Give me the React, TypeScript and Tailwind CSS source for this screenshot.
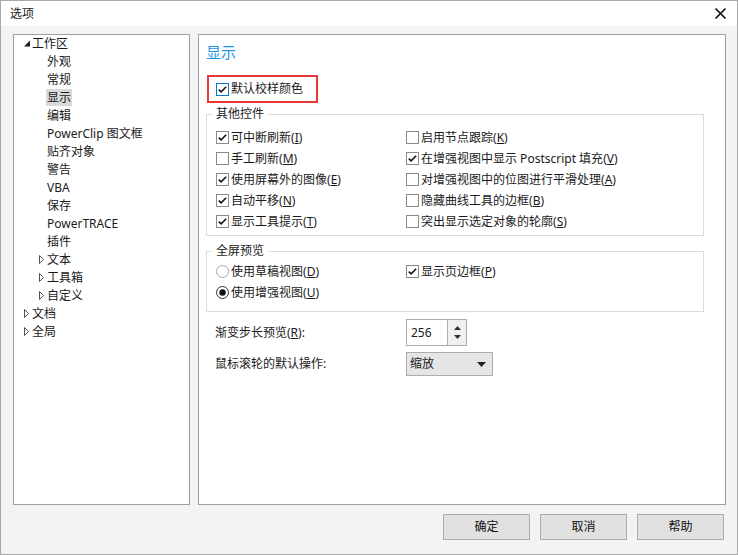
import React from 'react';

const FONT = { fontFamily: '"Noto Sans", "Noto Sans CJK SC", sans-serif' };

type TreeItem = { label: string; level: 0 | 1; arrow?: 'open' | 'closed'; selected?: boolean };

const TREE: TreeItem[] = [
  { label: '工作区', level: 0, arrow: 'open' },
  { label: '外观', level: 1 },
  { label: '常规', level: 1 },
  { label: '显示', level: 1, selected: true },
  { label: '编辑', level: 1 },
  { label: 'PowerClip 图文框', level: 1 },
  { label: '贴齐对象', level: 1 },
  { label: '警告', level: 1 },
  { label: 'VBA', level: 1 },
  { label: '保存', level: 1 },
  { label: 'PowerTRACE', level: 1 },
  { label: '插件', level: 1 },
  { label: '文本', level: 1, arrow: 'closed' },
  { label: '工具箱', level: 1, arrow: 'closed' },
  { label: '自定义', level: 1, arrow: 'closed' },
  { label: '文档', level: 0, arrow: 'closed' },
  { label: '全局', level: 0, arrow: 'closed' },
];

function Arrow({ kind }: { kind: 'open' | 'closed' }) {
  if (kind === 'open') {
    return (
      <svg width="8" height="9" viewBox="0 0 8 9" className="shrink-0">
        <polygon points="7,1.5 7,7.5 1,7.5" fill="#1f1f1f" />
      </svg>
    );
  }
  return (
    <svg width="8" height="9" viewBox="0 0 8 9" className="shrink-0">
      <polygon points="1.5,0.5 5.5,4.5 1.5,8.5" fill="#fff" stroke="#505050" strokeWidth="1" />
    </svg>
  );
}

function Check({ checked, focus }: { checked?: boolean; focus?: boolean }) {
  return (
    <svg width="13" height="13" viewBox="0 0 13 13" className="shrink-0">
      <rect x="0.5" y="0.5" width="12" height="12" fill="#fff" stroke={focus ? '#0078d7' : '#8a8a8a'} />
      {checked && <path d="M2.8 6.6 L5.1 8.9 L10.2 3.8" fill="none" stroke="#111" strokeWidth="1.5" />}
    </svg>
  );
}

function Radio({ on }: { on?: boolean }) {
  return (
    <svg width="13" height="13" viewBox="0 0 13 13" className="shrink-0">
      <circle cx="6.5" cy="6.5" r="6" fill="#fff" stroke={on ? '#333' : '#a6a6a6'} />
      {on && <circle cx="6.5" cy="6.5" r="3.2" fill="#111" />}
    </svg>
  );
}

function Opt({ text, k, checked, radio }: { text: string; k: string; checked?: boolean; radio?: boolean }) {
  return (
    <div className="flex h-[21px] items-center gap-[2px]">
      {radio ? <Radio on={checked} /> : <Check checked={checked} />}
      <span className="text-[12px] leading-[16px] text-[#1a1a1a] whitespace-nowrap">
        {text}(<u>{k}</u>)
      </span>
    </div>
  );
}

function Button({ children }: { children: React.ReactNode }) {
  return (
    <div className="flex h-[26px] w-[87px] items-center justify-center border border-[#adadad] bg-[#e1e1e1] text-[12px] text-[#111]">
      {children}
    </div>
  );
}

export default function App() {
  return (
    <div style={FONT} className="flex h-[555px] w-[738px] flex-col border border-[#a9a9a9] bg-white text-[#1a1a1a]">
      {/* title bar */}
      <div className="flex h-[25px] shrink-0 items-center justify-between bg-white pl-[9px] pr-[10px]">
        <span className="text-[12px] leading-[16px]">选项</span>
        <svg width="13" height="13" viewBox="0 0 13 13">
          <path d="M1.5 1.5 L11.5 11.5 M11.5 1.5 L1.5 11.5" stroke="#111" strokeWidth="1.7" />
        </svg>
      </div>

      <div className="flex flex-1 flex-col bg-[#f3f3f3] pl-[12px] pr-[11px] pt-[8px]">
        <div className="flex h-[471px] gap-[8px]">
          {/* tree */}
          <div className="w-[177px] border border-[#a0a0a0] bg-white">
            {TREE.map((t, i) => (
              <div
                key={i}
                className={`flex h-[18px] items-center ${t.level === 0 ? 'pl-[9px]' : 'pl-[24px]'} ${i === 0 ? '-mt-[1px]' : ''}`}
              >
                <div className="flex w-[9px] items-center">{t.arrow && <Arrow kind={t.arrow} />}</div>
                <span
                  className={`text-[12px] leading-[17px] whitespace-nowrap ${
                    t.selected ? 'bg-[#d9d9d9] px-[1px] -mx-[1px]' : ''
                  }`}
                >
                  {t.label}
                </span>
              </div>
            ))}
          </div>

          {/* content */}
          <div className="flex-1 border border-[#a0a0a0] bg-white pl-[7px] pt-[8px]">
            <div className="h-[18px] text-[15px] leading-[18px] text-[#1c97ea]">显示</div>

            <div className="mt-[14px] ml-[1px] flex h-[28px] w-[111px] items-center gap-[2px] border-2 border-[#e83a3a] pl-[7px]">
              <Check checked focus />
              <span className="text-[12px] leading-[16px]">默认校样颜色</span>
            </div>

            {/* 其他控件 */}
            <div className="relative mt-[11px] h-[122px] w-[498px] border border-[#dcdcdc] pl-[9px] pt-[12px]">
              <span className="absolute -top-[9px] left-[5px] bg-white px-[4px] text-[12px] leading-[16px]">其他控件</span>
              <div className="grid grid-cols-[190px_1fr]">
                <div>
                  <Opt text="可中断刷新" k="I" checked />
                  <Opt text="手工刷新" k="M" />
                  <Opt text="使用屏幕外的图像" k="E" checked />
                  <Opt text="自动平移" k="N" checked />
                  <Opt text="显示工具提示" k="T" checked />
                </div>
                <div>
                  <Opt text="启用节点跟踪" k="K" />
                  <Opt text="在增强视图中显示 Postscript 填充" k="V" checked />
                  <Opt text="对增强视图中的位图进行平滑处理" k="A" />
                  <Opt text="隐藏曲线工具的边框" k="B" />
                  <Opt text="突出显示选定对象的轮廓" k="S" />
                </div>
              </div>
            </div>

            {/* 全屏预览 */}
            <div className="relative mt-[15px] h-[61px] w-[498px] border border-[#dcdcdc] pl-[9px] pt-[9px]">
              <span className="absolute -top-[9px] left-[5px] bg-white px-[4px] text-[12px] leading-[16px]">全屏预览</span>
              <div className="grid grid-cols-[190px_1fr]">
                <div>
                  <Opt text="使用草稿视图" k="D" radio />
                  <Opt text="使用增强视图" k="U" radio checked />
                </div>
                <div>
                  <Opt text="显示页边框" k="P" checked />
                </div>
              </div>
            </div>

            <div className="mt-[7px] flex h-[27px] items-center">
              <span className="w-[200px] pl-[9px] text-[12px] leading-[16px]">
                渐变步长预览(<u>R</u>):
              </span>
              <div className="flex h-[27px] w-[61px] border border-[#adadad] bg-white">
                <div className="flex flex-1 items-center pl-[4px] text-[12px]">256</div>
                <div className="flex w-[19px] flex-col items-center justify-center gap-[5px] border-l border-[#adadad] bg-[#f0f0f0]">
                  <svg width="7" height="4" viewBox="0 0 7 4">
                    <polygon points="3.5,0 7,4 0,4" fill="#333" />
                  </svg>
                  <svg width="7" height="4" viewBox="0 0 7 4">
                    <polygon points="0,0 7,0 3.5,4" fill="#333" />
                  </svg>
                </div>
              </div>
            </div>

            <div className="mt-[6px] flex h-[24px] items-center">
              <span className="w-[200px] pl-[9px] text-[12px] leading-[16px]">鼠标滚轮的默认操作:</span>
              <div className="flex h-[24px] w-[87px] items-center justify-between border border-[#adadad] bg-[#e5e5e5] pl-[3px] pr-[6px] text-[12px]">
                <span>缩放</span>
                <svg width="9" height="5" viewBox="0 0 9 5">
                  <polygon points="0,0 9,0 4.5,5" fill="#222" />
                </svg>
              </div>
            </div>
          </div>
        </div>

        <div className="mt-[9px] flex justify-end gap-[10px] pr-[2px]">
          <Button>确定</Button>
          <Button>取消</Button>
          <Button>帮助</Button>
        </div>
      </div>
    </div>
  );
}
